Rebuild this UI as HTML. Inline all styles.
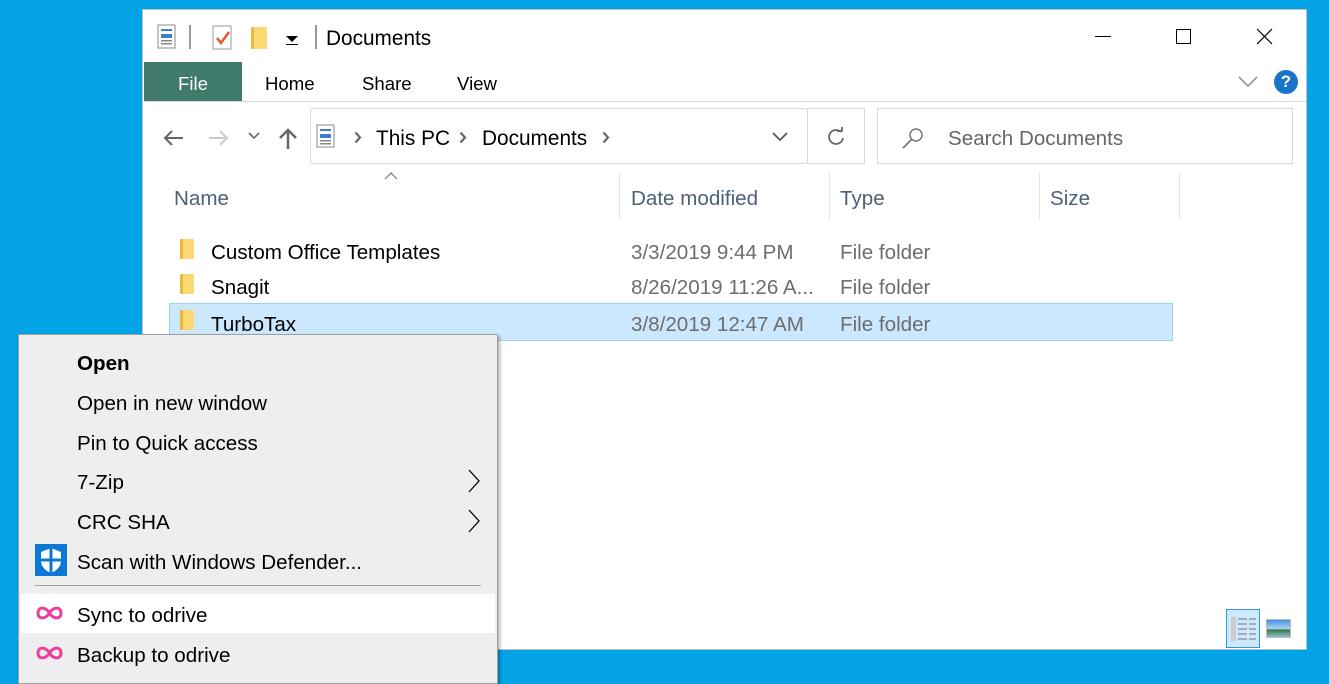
<!DOCTYPE html>
<html><head><style>
*{margin:0;padding:0;box-sizing:border-box}
body{width:1329px;height:679px;background:#02a3e7;position:relative;overflow:hidden;font-family:"Liberation Sans","DejaVu Sans",sans-serif;color:#000}
.a{position:absolute;white-space:nowrap}
#win{position:absolute;left:142px;top:9px;width:1165px;height:641px;background:#fff;border:1px solid #bfbfbf}
.t{font-size:20.6px}
.g{color:#4c607a}
.m{font-size:20.6px;color:#000}
.fold{position:absolute;width:14px;height:20px;background:linear-gradient(90deg,#e8b93e 0 3px,#fcd873 3px);border-radius:1px}
.chev{position:absolute}
</style></head><body>
<div id="win"></div>
<!-- title bar -->
<svg class="a" style="left:157px;top:24px" width="20" height="26"><rect x="1" y="1" width="17" height="23" fill="#fff" stroke="#888"/><rect x="4" y="5" width="11" height="2" fill="#3b7fd1"/><rect x="4" y="10" width="11" height="4" fill="#3b7fd1"/><rect x="4" y="16" width="11" height="1.5" fill="#888"/><rect x="4" y="19" width="11" height="1.5" fill="#888"/></svg>
<div class="a" style="left:189px;top:25px;width:2px;height:24px;background:#999"></div>
<svg class="a" style="left:212px;top:25px" width="22" height="26"><rect x="1" y="1" width="18" height="23" fill="#fff" stroke="#999"/><path d="M5 13 L9 18 L17 7" stroke="#e4572e" stroke-width="2.5" fill="none"/></svg>
<div class="fold" style="left:251px;top:27px;width:16px;height:22px"></div>
<div class="a" style="left:286px;top:36px;border-left:6px solid transparent;border-right:6px solid transparent;border-top:6px solid #000"></div>
<div class="a" style="left:286px;top:44px;width:12px;height:1px;background:#000"></div>
<div class="a" style="left:315px;top:25px;width:2px;height:24px;background:#999"></div>
<div class="a t" style="left:326px;top:27px;font-size:20.8px">Documents</div>
<div class="a" style="left:1095px;top:36px;width:16px;height:1px;background:#000"></div>
<div class="a" style="left:1176px;top:29px;width:15px;height:15px;border:1px solid #000"></div>
<svg class="a" style="left:1256px;top:28px" width="17" height="17"><path d="M1 1L16 16M16 1L1 16" stroke="#000" stroke-width="1.2"/></svg>
<!-- ribbon -->
<div class="a" style="left:144px;top:62px;width:98px;height:40px;background:#3f7a6b"></div>
<div class="a t" style="left:178px;top:73px;color:#fff;font-size:18.6px">File</div>
<div class="a t" style="left:265px;top:73px;font-size:18.6px">Home</div>
<div class="a t" style="left:362px;top:73px;font-size:18.6px">Share</div>
<div class="a t" style="left:457px;top:73px;font-size:18.6px">View</div>
<svg class="a" style="left:1237px;top:75px" width="22" height="14"><path d="M2 2L11 11L20 2" stroke="#888" stroke-width="1.5" fill="none"/></svg>
<div class="a" style="left:1274px;top:70px;width:24px;height:24px;border-radius:50%;background:#1a73c9;color:#fff;font-weight:bold;font-size:17px;text-align:center;line-height:24px">?</div>
<div class="a" style="left:144px;top:101px;width:1162px;height:1px;background:#dadada"></div>
<!-- nav -->
<svg class="a" style="left:162px;top:128px" width="22" height="20"><path d="M21 10H3M10 3L3 10L10 17" stroke="#666" stroke-width="2" fill="none"/></svg>
<svg class="a" style="left:208px;top:128px" width="22" height="20"><path d="M1 10H19M12 3L19 10L12 17" stroke="#ccc" stroke-width="2" fill="none"/></svg>
<svg class="a" style="left:248px;top:132px" width="12" height="8"><path d="M1 1L6 6L11 1" stroke="#666" stroke-width="1.6" fill="none"/></svg>
<svg class="a" style="left:278px;top:127px" width="20" height="23"><path d="M10 22V3M2 11L10 3L18 11" stroke="#666" stroke-width="2.5" fill="none"/></svg>
<div class="a" style="left:310px;top:108px;width:555px;height:56px;border:1px solid #d9d9d9"></div>
<div class="a" style="left:807px;top:108px;width:1px;height:56px;background:#d9d9d9"></div>
<svg class="a" style="left:316px;top:124px" width="20" height="25"><rect x="1" y="1" width="17" height="22" fill="#fff" stroke="#888"/><rect x="4" y="5" width="11" height="2" fill="#3b7fd1"/><rect x="4" y="10" width="11" height="4" fill="#3b7fd1"/><rect x="4" y="16" width="11" height="1.5" fill="#888"/><rect x="4" y="19" width="11" height="1.5" fill="#888"/></svg>
<svg class="chev" style="left:354px;top:131px" width="8" height="13"><path d="M1.5 1.5L6 6.5L1.5 11.5" stroke="#666" stroke-width="2.2" fill="none"/></svg>
<div class="a t" style="left:376px;top:127px;font-size:20.8px">This PC</div>
<svg class="chev" style="left:459px;top:131px" width="8" height="13"><path d="M1.5 1.5L6 6.5L1.5 11.5" stroke="#666" stroke-width="2.2" fill="none"/></svg>
<div class="a t" style="left:482px;top:127px;font-size:20.8px">Documents</div>
<svg class="chev" style="left:602px;top:131px" width="8" height="13"><path d="M1.5 1.5L6 6.5L1.5 11.5" stroke="#666" stroke-width="2.2" fill="none"/></svg>
<svg class="a" style="left:772px;top:132px" width="16" height="10"><path d="M1 1L8 8L15 1" stroke="#555" stroke-width="1.8" fill="none"/></svg>
<svg class="a" style="left:826px;top:127px" width="20" height="20"><path d="M15 5A7 7 0 1 0 17 11" stroke="#666" stroke-width="1.8" fill="none"/><path d="M11 4L16 4L16 -1" stroke="#666" stroke-width="1.8" fill="none"/></svg>
<div class="a" style="left:877px;top:108px;width:416px;height:56px;border:1px solid #d9d9d9"></div>
<svg class="a" style="left:901px;top:127px" width="24" height="22"><circle cx="15" cy="8" r="6" stroke="#777" stroke-width="1.5" fill="none"/><path d="M11 12L2 21" stroke="#777" stroke-width="1.8"/></svg>
<div class="a t" style="left:948px;top:127px;color:#666;font-size:20.6px">Search Documents</div>
<!-- headers -->
<svg class="a" style="left:384px;top:171px" width="14" height="9"><path d="M1 8L7 2L13 8" stroke="#777" stroke-width="1.2" fill="none"/></svg>
<div class="a t g" style="left:174px;top:187px">Name</div>
<div class="a" style="left:619px;top:172px;width:1px;height:48px;background:#e5e5e5"></div>
<div class="a t g" style="left:631px;top:187px">Date modified</div>
<div class="a" style="left:829px;top:172px;width:1px;height:48px;background:#e5e5e5"></div>
<div class="a t g" style="left:840px;top:187px">Type</div>
<div class="a" style="left:1039px;top:172px;width:1px;height:48px;background:#e5e5e5"></div>
<div class="a t g" style="left:1050px;top:187px">Size</div>
<div class="a" style="left:1179px;top:172px;width:1px;height:48px;background:#e5e5e5"></div>
<!-- rows -->
<div class="a" style="left:169px;top:303px;width:1004px;height:38px;background:#cce8ff;border:1px solid #99d1ff"></div>
<div class="fold" style="left:180px;top:239px"></div>
<div class="fold" style="left:180px;top:274px"></div>
<div class="fold" style="left:180px;top:310px"></div>
<div class="a t" style="left:211px;top:241px">Custom Office Templates</div>
<div class="a t" style="left:211px;top:276px">Snagit</div>
<div class="a t" style="left:211px;top:313px">TurboTax</div>
<div class="a t" style="left:631px;top:241px;color:#6d6d6d">3/3/2019 9:44 PM</div>
<div class="a t" style="left:631px;top:276px;color:#6d6d6d">8/26/2019 11:26 A...</div>
<div class="a t" style="left:631px;top:313px;color:#6d6d6d">3/8/2019 12:47 AM</div>
<div class="a t" style="left:840px;top:241px;color:#6d6d6d">File folder</div>
<div class="a t" style="left:840px;top:276px;color:#6d6d6d">File folder</div>
<div class="a t" style="left:840px;top:313px;color:#6d6d6d">File folder</div>
<!-- view buttons -->
<div class="a" style="left:1226px;top:609px;width:34px;height:39px;background:#cce8ff;border:1px solid #3399dd"></div>
<svg class="a" style="left:1231px;top:617px" width="26" height="24"><rect x="0" y="0" width="5" height="24" fill="#ccc"/><g stroke="#888" stroke-width="1.3"><path d="M7 2H16M18 2H25M7 7H16M18 7H25M7 12H16M18 12H25M7 17H16M18 17H25M7 22H16M18 22H25"/></g></svg>
<div class="a" style="left:1266px;top:619px;width:25px;height:19px;border:1px solid #bbb;background:linear-gradient(#4a8ee0,#a8d4f5 50%,#3d7a45 60%,#8ec0da)"></div>
<!-- context menu -->
<div class="a" style="left:18px;top:334px;width:480px;height:350px;background:#eeeeee;border:1px solid #a0a0a0;box-shadow:2px 2px 3px rgba(0,0,0,.3)"></div>
<div class="a m" style="left:77px;top:352px;font-weight:bold">Open</div>
<div class="a m" style="left:77px;top:392px">Open in new window</div>
<div class="a m" style="left:77px;top:432px">Pin to Quick access</div>
<div class="a m" style="left:77px;top:471px">7-Zip</div>
<svg class="a" style="left:467px;top:468px" width="14" height="26"><path d="M2 2L12 13L2 24" stroke="#000" stroke-width="1.3" fill="none"/></svg>
<div class="a m" style="left:77px;top:511px">CRC SHA</div>
<svg class="a" style="left:467px;top:508px" width="14" height="26"><path d="M2 2L12 13L2 24" stroke="#000" stroke-width="1.3" fill="none"/></svg>
<svg class="a" style="left:35px;top:544px" width="32" height="32"><rect width="32" height="32" fill="#0a78d4"/><path d="M16 4L26 8V17C26 23 21 27 16 29C11 27 6 23 6 17V8Z" fill="#fff"/><path d="M16 4V29M6 16H26" stroke="#0a78d4" stroke-width="3"/></svg>
<div class="a m" style="left:77px;top:551px">Scan with Windows Defender...</div>
<div class="a" style="left:35px;top:585px;width:446px;height:1px;background:#a0a0a0"></div>
<div class="a" style="left:21px;top:594px;width:474px;height:39px;background:#fff"></div>
<svg class="a" style="left:35px;top:603px" width="29" height="20"><path d="M14.5 10C11 4 3 3 3 10C3 17 11 16 14.5 10C18 4 26 3 26 10C26 17 18 16 14.5 10Z" stroke="#ec3e9b" stroke-width="3" fill="none"/></svg>
<div class="a m" style="left:77px;top:604px">Sync to odrive</div>
<svg class="a" style="left:35px;top:643px" width="29" height="20"><path d="M14.5 10C11 4 3 3 3 10C3 17 11 16 14.5 10C18 4 26 3 26 10C26 17 18 16 14.5 10Z" stroke="#ec3e9b" stroke-width="3" fill="none"/></svg>
<div class="a m" style="left:77px;top:644px">Backup to odrive</div>
</body></html>
